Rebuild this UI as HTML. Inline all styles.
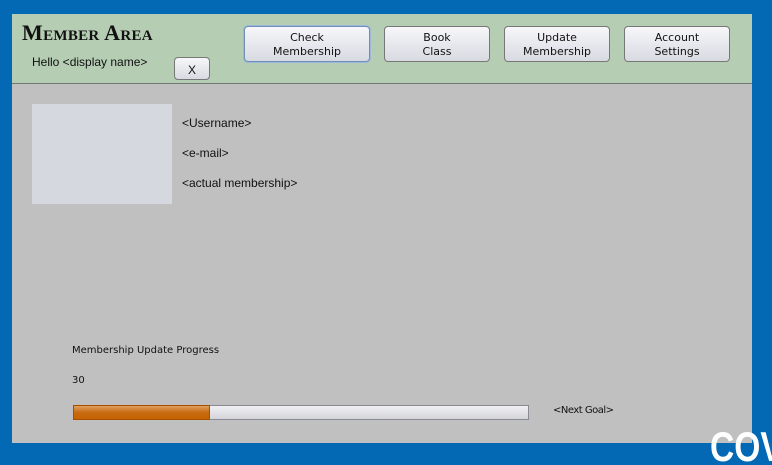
<!DOCTYPE html>
<html style="overflow:hidden;height:465px;"><head><style>
html,body{margin:0;width:772px;height:465px;overflow:hidden;}
body{background:#0369b4;position:relative;font-family:"DejaVu Sans","Liberation Sans",sans-serif;}
.panel{position:absolute;left:12px;top:14px;width:740px;height:429px;background:#c0c0c0;}
.hdr{position:absolute;left:0;top:0;width:740px;height:69px;background:#b5cdb3;border-bottom:1px solid #6e7a6e;}
.t{position:absolute;font-size:11px;color:#111;white-space:nowrap;}
.btn{position:absolute;top:12px;height:36px;border:1px solid #777;border-radius:4px;background:linear-gradient(#f7f7fa,#d8dae2);font-size:11px;text-align:center;line-height:14px;color:#111;box-sizing:border-box;padding-top:4px;}
</style></head><body>
<div class="panel">
<div class="hdr">
<div class="t" style="left:10px;top:6px;font-family:'Liberation Serif',serif;font-weight:bold;font-size:22px;letter-spacing:0.3px;font-variant:small-caps;">Member Area</div>
<div class="t" style="left:20px;top:41px;font-family:'Liberation Sans',sans-serif;font-size:12px;">Hello &lt;display name&gt;</div>
<div class="btn" style="left:162px;top:43px;width:36px;height:23px;font-family:'Liberation Sans',sans-serif;font-size:12px;padding-top:5px;">X</div>
<div class="btn" style="left:232px;width:126px;border-color:#6f8fb8;box-shadow:0 0 0 1px #9bb8d8;">Check<br>Membership</div>
<div class="btn" style="left:372px;width:106px;">Book<br>Class</div>
<div class="btn" style="left:492px;width:106px;">Update<br>Membership</div>
<div class="btn" style="left:612px;width:106px;">Account<br>Settings</div>
</div>
<div style="position:absolute;left:20px;top:90px;width:140px;height:100px;background:#d6d8e0;"></div>
<div class="t" style="left:170px;top:102px;font-family:'Liberation Sans',sans-serif;font-size:12px;">&lt;Username&gt;</div>
<div class="t" style="left:170px;top:132px;font-family:'Liberation Sans',sans-serif;font-size:12px;">&lt;e-mail&gt;</div>
<div class="t" style="left:170px;top:162px;font-family:'Liberation Sans',sans-serif;font-size:12px;">&lt;actual membership&gt;</div>
<div class="t" style="left:60px;top:331px;font-size:10px;">Membership Update Progress</div>
<div class="t" style="left:60px;top:361px;font-size:10px;">30</div>
<div style="position:absolute;left:61px;top:391px;width:456px;height:15px;border:1px solid #8a8a96;background:linear-gradient(#f0f0f2,#d4d5da);box-sizing:border-box;"></div>
<div style="position:absolute;left:61px;top:391px;width:137px;height:15px;border:1px solid #a84e00;background:linear-gradient(#e0a060,#c86a10 50%,#c46400);box-sizing:border-box;"></div>
<div class="t" style="left:541px;top:391px;font-size:10px;letter-spacing:-0.5px;">&lt;Next Goal&gt;</div>
</div>
<div style="position:absolute;left:710px;top:422px;color:#fff;font-family:'Liberation Sans',sans-serif;font-weight:bold;font-size:42px;line-height:50px;transform:scaleX(0.8);transform-origin:left top;">COV</div>
</body></html>
